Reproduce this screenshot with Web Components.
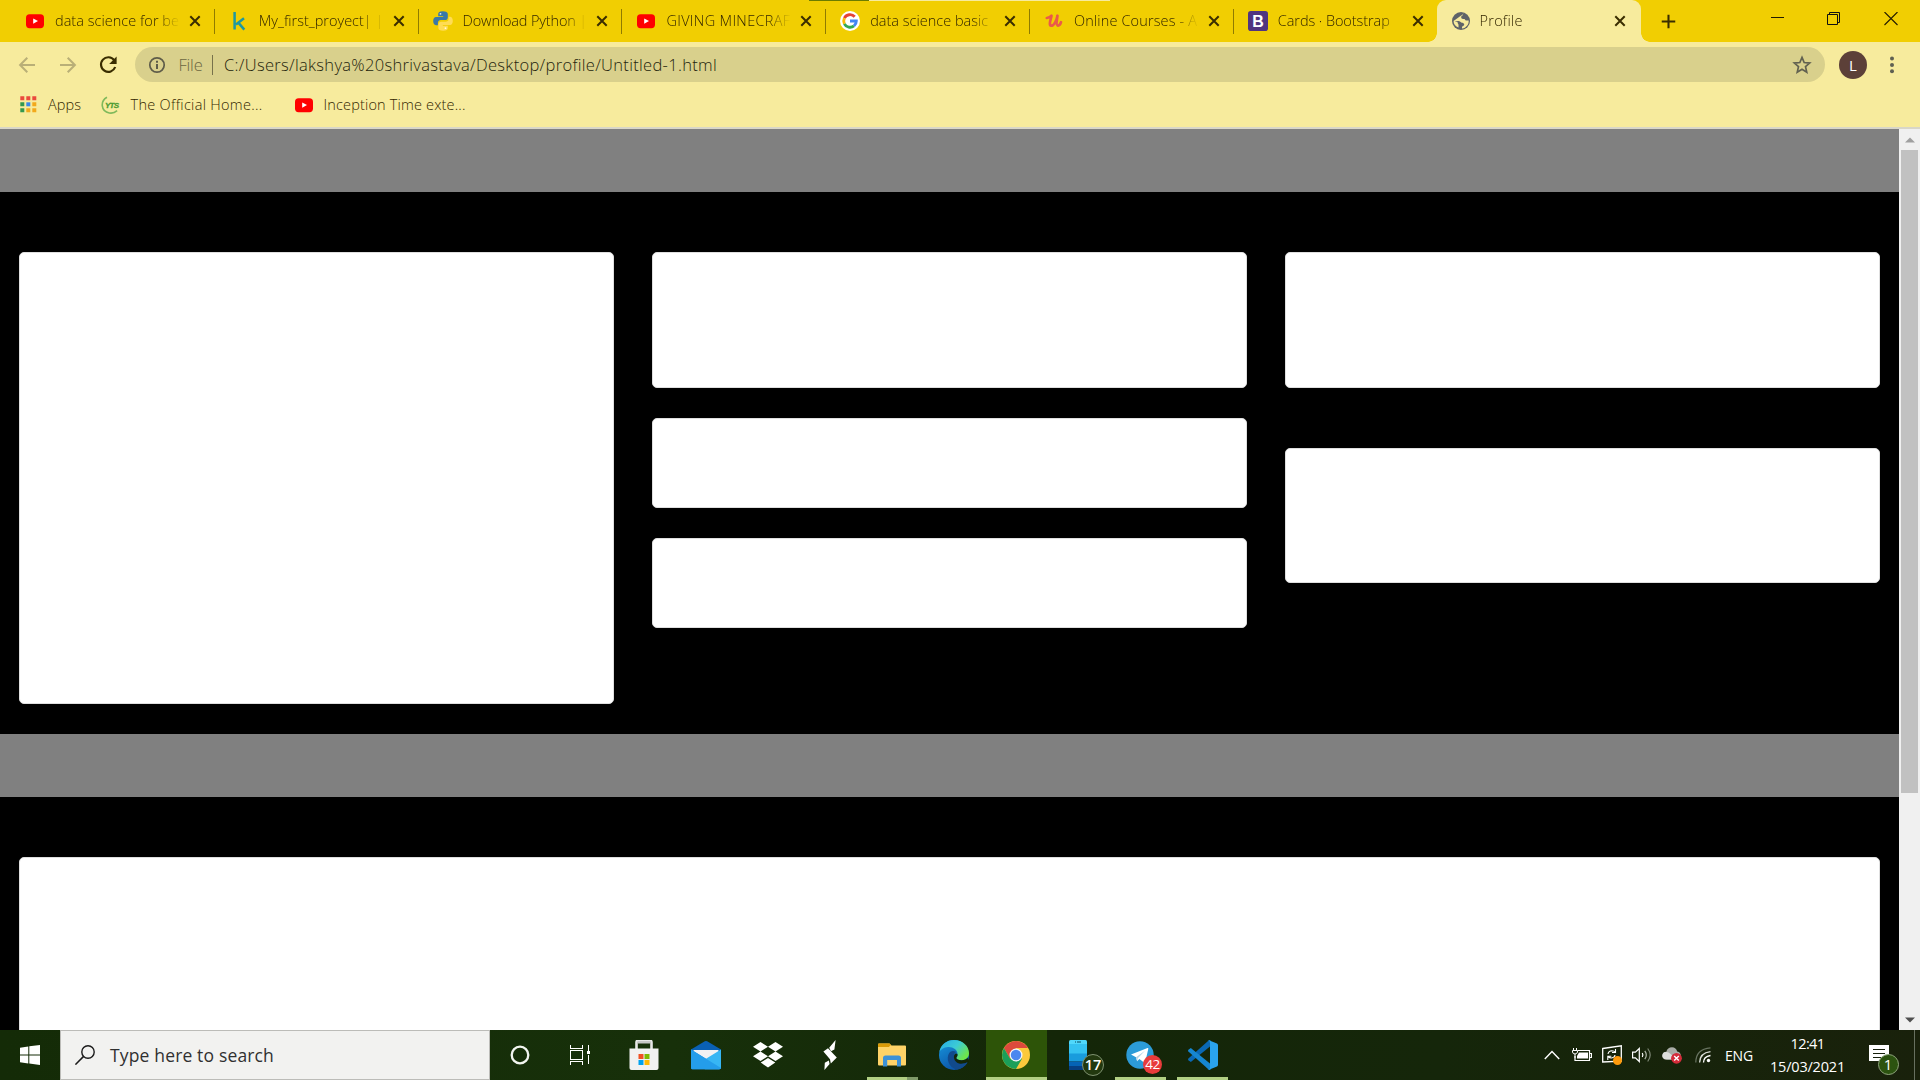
<!DOCTYPE html>
<html lang="en">
<head>
<meta charset="utf-8">
<title>Profile</title>
<style>
html,body{margin:0;padding:0;height:1080px;width:1920px;overflow:hidden;background:#000;font-family:"Open Sans","Noto Sans",sans-serif}
</style>
</head>
<body>
<desktop-screen></desktop-screen>
<script>
const ICONS = {
youtube:`<svg viewBox="0 0 20 20"><rect x="1" y="3.2" width="18" height="14" rx="3.6" fill="#f00"/><path d="M8.2 7.4v5.4l4.8-2.7z" fill="#fff"/></svg>`,
kaggle:`<svg viewBox="0 0 20 20"><path d="M5.6 1v17.5M15 7.2 7 13.6M9.3 11.6l6 7" stroke="#1f98a0" stroke-width="2.5" fill="none"/></svg>`,
python:`<svg viewBox="0 0 20 20"><path d="M9.8.2C6.400.2 5.200 1.300 5.200 3v2.200h5v.9H3C1.200 6.100.2 7.800.2 10.100s1 4.100 2.800 4.100h1.900v-2.300c0-1.700 1.300-2.900 3-2.900h4.300c1.600 0 2.600-1.100 2.600-2.600V3c0-1.700-1.700-2.800-5-2.800z" fill="#3a78a8"/><circle cx="7.500" cy="2.800" r=".9" fill="#dce9f2"/><path d="M10.200 19.800c3.400 0 4.600-1.100 4.600-2.800v-2.200h-5v-.9H17c1.800 0 2.800-1.700 2.800-4S18.800 5.800 17 5.800h-1.400v2.300c0 1.700-1.300 2.700-3 2.700H8.300c-1.700 0-2.900 1.200-2.900 2.700V17c0 1.700 1.500 2.800 4.800 2.800z" fill="#ffdc55"/><circle cx="12.500" cy="17.200" r=".9" fill="#fffbe0"/></svg>`,
google:`<svg viewBox="0 0 20 20"><circle cx="10" cy="10" r="10" fill="#fff"/><g fill="none" stroke-width="2.900"><path d="M14.700 5.700A6.300 6.300 0 0 0 4.400 7.200" stroke="#e54234"/><path d="M4.400 7.200a6.300 6.300 0 0 0 0 5.600" stroke="#fbbc05"/><path d="M4.400 12.800A6.300 6.300 0 0 0 14 14.900" stroke="#34a853"/><path d="M14 14.900A6.300 6.300 0 0 0 16.300 10H10" stroke="#4285f4"/></g></svg>`,
udemy:`<svg viewBox="0 0 20 20"><path d="M2.800 7Q6 6.500 7.500 4.700C7 8 4.300 14.200 7.200 14.700c3 .2 5.500-6 6.300-10-.5 4-2 9.500.3 9.900 1.700.2 2.700-1.700 3.200-3.400" stroke="#ea5a4a" stroke-width="2.700" fill="none" stroke-linecap="round" stroke-linejoin="round"/></svg>`,
bootstrap:`<svg viewBox="0 0 20 20"><rect width="20" height="20" rx="2.800" fill="#503480"/><text x="10" y="15.700" text-anchor="middle" font-family="Liberation Sans,sans-serif" font-weight="700" font-size="16" fill="#fff">B</text></svg>`,
globe:`<svg viewBox="0 0 20 20"><circle cx="10" cy="10" r="9" fill="#5f6368"/><path d="M13.200 2.300c-1 .4-1.400 1-1.300 2-.9.200-1.700.8-1.700 1.900 0 1 .7 1.700 1.800 1.700h1.300c.9 0 .7 1.500 1.700 1.600h2.700c.3 4-2.600 7.600-6.700 8.100v-1.900c1.100-.4 2.200-1 2.200-2.100 0-1.300-1.300-1.900-2.500-1.900-1-.1-1.700-1.600-3.200-1.600H3.100L2.700 9l1.500 1.300c1 .7 2.400 0 2.400 1.200 0 1.100.9 1.300.9 2.200v2.800c-3-1-5-3.600-4.900-6.600z" fill="#f7eb9d"/></svg>`,
close:`<svg viewBox="0 0 12 12"><path d="M1.300 1.300l9.400 9.400M10.700 1.300l-9.400 9.400" stroke="#3a2d00" stroke-width="2"/></svg>`,
plus:`<svg viewBox="0 0 16 16"><path d="M8 .8v14.400M.8 8h14.400" stroke="#3a2d00" stroke-width="2.200"/></svg>`,
winmin:`<svg viewBox="0 0 14 14"><path d="M.5 5.500h13" stroke="#221b00" shape-rendering="crispEdges"/></svg>`,
winmax:`<svg viewBox="0 0 14 14"><path d="M.5 2.500h10v10H.5zM2.500 2.500v-2h10v10h-2" fill="none" stroke="#111"/></svg>`,
winclose:`<svg viewBox="0 0 14 14"><path d="M.5 0l13 13M13.500 0l-13 13" stroke="#221b00" stroke-width="1.100"/></svg>`,
back:`<svg viewBox="0 0 20 20"><path d="M18 10H3.500M10.300 2.800 3.100 10l7.200 7.200" fill="none" stroke="#b9af77" stroke-width="2"/></svg>`,
forward:`<svg viewBox="0 0 20 20"><path d="M2 10h14.500M9.700 2.800l7.200 7.200-7.200 7.200" fill="none" stroke="#b9af77" stroke-width="2"/></svg>`,
reload:`<svg viewBox="0 0 20 20"><path d="M16.200 5.200A7.300 7.300 0 1 0 17.200 12" fill="none" stroke="#3a2d00" stroke-width="2.200"/><path d="M18.600 1.500v7.400h-7.400z" fill="#3a2d00"/></svg>`,
info:`<svg viewBox="0 0 18 18"><circle cx="9" cy="9" r="7.200" fill="none" stroke="#5e5c49" stroke-width="1.700"/><path d="M9 8v5M9 4.800v1.900" stroke="#5e5c49" stroke-width="2"/></svg>`,
star:`<svg viewBox="0 0 20 20"><path d="M10 2.400l2.150 5.150 5.550.48-4.200 3.650 1.250 5.450L10 14.250l-4.750 2.880 1.250-5.450L2.300 8.030l5.550-.48z" fill="none" stroke="#626150" stroke-width="1.700"/></svg>`,
dots:`<svg viewBox="0 0 6 20"><g fill="#5f6052"><circle cx="3" cy="3.500" r="2"/><circle cx="3" cy="10" r="2"/><circle cx="3" cy="16.300" r="2"/></g></svg>`,
apps:`<svg viewBox="0 0 17 17"><g><path d="M.3.300h4v4h-4zM6.300.300h4v4h-4zM12.300.300h4v4h-4z" fill="#ea4a3d"/><path d="M.3 6.300h4v4h-4zM.3 12.300h4v4h-4z" fill="#34984e"/><path d="M6.300 6.300h4v4h-4z" fill="#3b87e8"/><path d="M12.300 6.300h4v4h-4zM6.300 12.300h4v4h-4zM12.300 12.300h4v4h-4z" fill="#f2a91b"/></g></svg>`,
yts:`<svg viewBox="0 0 20 20"><path d="M6 2.200C-1 6-.3 16.500 8.300 18c3 .5 5.800-.5 7.800-2.300" fill="none" stroke="#7fb95b" stroke-width="1.600"/><text x="4" y="12.600" font-family="Liberation Sans,sans-serif" font-size="8" font-weight="700" font-style="italic" fill="#4d9b32" stroke="#4d9b32" stroke-width=".3" textLength="14">YTS</text></svg>`,
windows:`<svg viewBox="0 0 20 20"><path d="M0 2.700 8.300 1.500V9.400H0zM9.300 1.300 20 0v9.400H9.300zM0 10.400h8.300v8L0 17.300zM9.300 10.400H20V20L9.300 18.500z" fill="#fff"/></svg>`,
search:`<svg viewBox="0 0 20 20"><circle cx="13" cy="7" r="6.200" fill="none" stroke="#1b1b1b" stroke-width="1.400"/><path d="M8.600 11.400.4 19.600" stroke="#1b1b1b" stroke-width="1.500"/></svg>`,
cortana:`<svg viewBox="0 0 20 20"><circle cx="10" cy="10" r="8.300" fill="none" stroke="#f2f5f0" stroke-width="2.300"/></svg>`,
taskview:`<svg viewBox="0 0 20 20"><g fill="none" stroke="#fff" shape-rendering="crispEdges"><path d="M.5 0v3.500h12V0M.5 5.500h12v9H.5zM.5 20v-3.500h12V20M18.500 0v6M18.500 10v9"/></g><path d="M17 6h3v3h-3z" fill="#fff"/></svg>`,
store:`<svg viewBox="0 0 30 30"><path d="M7.500 11V2.500a2 2 0 0 1 2-2h11a2 2 0 0 1 2 2V11" fill="none" stroke="#e8e8e8" stroke-width="2.600"/><path d="M8.500 1h13v2.500h-13z" fill="#c6c6c6"/><path d="M.5 8.500h29V28a2 2 0 0 1-2 2h-25a2 2 0 0 1-2-2z" fill="#f1f1f1"/><path d="M9.500 14h5v5h-5z" fill="#f05023"/><path d="M15.500 14h5v5h-5z" fill="#7fba00"/><path d="M9.500 20h5v5h-5z" fill="#00a1ee"/><path d="M15.500 20h5v5h-5z" fill="#ffb901"/></svg>`,
mail:`<svg viewBox="0 0 30 30"><path d="M0 9.500 13.800 1.300q1.200-.6 2.400 0L30 9.500v8H0z" fill="#0a60b4"/><path d="M2.500 10h25v9h-25z" fill="#f1f1f3"/><path d="M0 9.500 30 28a2 2 0 0 1-2 1.200H1.500A1.500 1.500 0 0 1 0 27.700z" fill="#1c8fe2"/><path d="M30 9.500V28q-.4 1.200-2 1.200H14L4 24 15 18.800z" fill="#37b6f4"/><path d="M0 9.500 15 18.800 30 28q-.5 1.200-2 1.200H1.500A1.500 1.500 0 0 1 0 27.700z" fill="#249dea"/></svg>`,
dropbox:`<svg viewBox="0 0 30 26"><path d="M7.500 0 15 4.700 7.500 9.400 0 4.700zM22.500 0 30 4.700l-7.500 4.700L15 4.700zM7.500 9.600 15 14.300 7.500 19 0 14.300zM22.500 9.600 30 14.300 22.500 19 15 14.300zM15 16l7.300 4.600L15 25.400l-7.300-4.800z" fill="#fff"/></svg>`,
bolt:`<svg viewBox="0 0 14 30"><path d="M12.600 0 11.400 9.600 8 11.200 6.200 7.800zM5 8.200 13.800 17.600 7.800 23.400 7 19.200.4 11.400zM5.800 20.600 6.600 24 1.400 30 1.800 22.800z" fill="#fff"/></svg>`,
explorer:`<svg viewBox="0 0 28 24"><path d="M0 1.500Q0 .5 1 .5h10.500l2 2H27q1 0 1 1v18q0 1-1 1H1q-1 0-1-1z" fill="#fed368"/><path d="M0 1.500Q0 .5 1 .5h10.500l1.500 1.500-2.200 2H0z" fill="#d99a07"/><path d="M5 23.500V15q0-2.500 2.500-2.500h13Q23 12.500 23 15v8.500h-4V17H9.200v6.500z" fill="#3c92d7"/></svg>`,
edge:`<svg viewBox="0 0 30 30"><defs><linearGradient id="a" y2=".6"><stop stop-color="#25a9e8"/><stop offset=".55" stop-color="#3ccbd5"/><stop offset="1" stop-color="#6ee649"/></linearGradient><linearGradient id="b" x2=".6" y2="1"><stop stop-color="#1798de"/><stop offset="1" stop-color="#0c51a4"/></linearGradient></defs><circle cx="15" cy="15" r="15" fill="url(#b)"/><path d="M.3 12C1.600 4.800 7.600 0 15 0c8.500 0 15 6 15 13.200 0 4.300-3.200 7-7.300 7-3.400 0-5.400-1.100-5.400-2.200 0-.8 1.300-1.300 1.300-3.600C18.600 9.600 13.600 6.600 9 7 4.600 7.300 1.600 9.500.3 12z" fill="url(#a)"/><path d="M10.200 13c-3.600 5.600-.3 14.500 7.600 16.700 4.200-.4 8.200-2.900 10.500-6.700.3-.7-.2-1-.8-.8-6.300 3-12.600.3-12.600-6 0-2 1-3.200 2.200-4.200-2.700-1.700-5.300-1.200-6.900 1z" fill="#114a8c"/><path d="M18.600 14.400c0 2.300-1.300 2.800-1.300 3.600 0 1.300 2.500 2.300 5.400 2.200 2.700 0 4.600-.9 5.900-2.500L30 22l-2 .3c-6.800 3.500-13 .3-13.100-5.600.1-2.600 2-4.500 3.700-2.300z" fill="#142608"/></svg>`,
chrome:`<svg viewBox="0 0 28 28"><circle cx="14" cy="14" r="14" fill="#fbc93c"/><path d="M1.900 7A14 14 0 0 1 26.100 7H14L8 17.500z" fill="#dc4a3c"/><path d="M1.900 7A14 14 0 0 0 14 28l6.100-10.500H8z" fill="#1b9f59"/><circle cx="14" cy="14" r="6.500" fill="#f4f6f9"/><circle cx="14" cy="14" r="5.200" fill="#4b87ef"/></svg>`,
phone:`<svg viewBox="0 0 18 30"><path d="M0 1.500Q0 0 1.500 0h15Q18 0 18 1.500V8H0z" fill="#50d8fb"/><path d="M0 4h18v10H0z" fill="#35c2f1"/><path d="M0 13.500h18v8H0z" fill="#199cdd"/><path d="M0 21.500h18v7q0 1.500-1.500 1.500h-15Q0 30 0 28.500z" fill="#0563b5"/><path d="M0 26h18v2.500q0 1.500-1.500 1.500h-15Q0 30 0 28.500z" fill="#063f82"/><path d="M6 2h1M8 2h4" stroke="#094b63" stroke-width="1.200"/></svg>`,
telegram:`<svg viewBox="0 0 28 28"><circle cx="14" cy="14" r="13.700" fill="#2c9bd8"/><path d="M5 13.500 21.500 7q1-.2.800.8l-3 13.200q-.3 1-1.300.4l-4.600-3.400-2.300 2.200L10 16.300z" fill="#fff"/><path d="M10 16.300 19 9.800l-7.200 7.500-.7 2.900z" fill="#b6d2e3"/></svg>`,
vscode:`<svg viewBox="0 0 30 30"><path d="M22 6.500 2.800 22 .4 20.200q-.7-.8 0-1.600L20.600.5q1-.8 2 0z" fill="#0a68b4"/><path d="M22 23.500 2.800 8 .4 9.800q-.7.800 0 1.600L20.600 29.500q1 .8 2 0z" fill="#1686d1"/><path d="M21.500.4 29 3.600q1 .5 1 1.700v19.400q0 1.200-1 1.700l-7.500 3.200q-1.200.5-2-.4 2.500.8 2.500-2V3.300q0-3.400-2.500-2.500.8-.9 2-.4z" fill="#2aa3ee"/></svg>`,
chevron:`<svg viewBox="0 0 16 10"><path d="M.8 9 8 1.500 15.200 9" fill="none" stroke="#fff" stroke-width="1.400"/></svg>`,
battery:`<svg viewBox="0 0 20 14"><path d="M6 2.500h11.500v10H3V8M18 5.500h1.500v4H18" fill="none" stroke="#fff" stroke-width="1.200"/><path d="M7 4.500h9v6H5V8z" fill="#fff"/><path d="M1.500 0v2M4.500 0v2M.5 2.500h5V4Q5 6 3 6 .8 6 .5 4zM3 6v4" fill="none" stroke="#fff"/></svg>`,
update:`<svg viewBox="0 0 20 20"><path d="M.7 3.500 19.300.8v15.400L.7 17z" fill="none" stroke="#fff" stroke-width="1.300"/><path d="M6 9Q6.500 6 10 5.700q2 0 3.300 1.500M13.500 4v3.500H10M13 10q-.5 2.700-3.500 3Q7.500 13 6 11.500M5.800 15v-3.700h3.500" fill="none" stroke="#fff" stroke-width="1.100"/><circle cx="15.500" cy="15.500" r="4.500" fill="#ff9a0c"/></svg>`,
volume:`<svg viewBox="0 0 20 18"><path d="M.6 6.200h2.800L7.300 2.500v13L3.400 11.800H.6z" fill="none" stroke="#fff" stroke-width="1.200"/><path d="M10.300 7q1.200 2 0 4" stroke="#fff" stroke-width="1.200" fill="none"/><path d="M12.800 4.800q3 4.200 0 8.400" stroke="#aeb6a8" stroke-width="1.200" fill="none"/><path d="M15.700 2.500q5 6.500 0 13" stroke="#7d8775" stroke-width="1.200" fill="none"/></svg>`,
cloud:`<svg viewBox="0 0 20 18"><path d="M5 13.500Q.3 13 .3 9.500.4 6 4.300 5.800 5.500 1.300 10 1.300q4.200.2 5.200 4.100Q19 6 18.700 10L14 13.500z" fill="#a9aca7"/><path d="M4 13.500Q.3 13 .3 9.700.6 6.300 4 6q2.500-.3 4.300 1.800L13 12v1.500z" fill="#dedfdd"/><circle cx="14.500" cy="12.300" r="5.400" fill="#d42b3a"/><path d="M12.200 10l4.600 4.600M16.800 10l-4.600 4.600" stroke="#fff" stroke-width="1.400"/></svg>`,
wifi:`<svg viewBox="0 0 16 16"><g fill="none" stroke-width="1.300"><path d="M.8 15.500Q.8 2 15.500.8" stroke="#687361"/><path d="M4.600 15.500Q4.800 6 15.500 4.700" stroke="#d9ddd6"/><path d="M8.500 15.500Q8.500 9.500 15.500 8.500" stroke="#fff"/></g><circle cx="13.500" cy="13.500" r="1.700" fill="#fff"/></svg>`,
notice:`<svg viewBox="0 0 20 20"><path d="M0 0h20v16H12l-2 4v-4H0z" fill="#fff"/><path d="M4 4.500h12M4 8.500h12M4 12.500h8" stroke="#17200d" stroke-width="1.200"/></svg>`,
up:`<svg viewBox="0 0 10 6"><path d="M0 5.500 5 .5l5 5z" fill="#9f9f9f"/></svg>`,
down:`<svg viewBox="0 0 10 6"><path d="M0 .5l5 5 5-5z" fill="#505050"/></svg>`
};

/* Registers an element whose open shadow root is cloned from a template. */
function define(tag, html, ready) {
  const t = document.createElement('template');
  t.innerHTML = html;
  customElements.define(tag, class extends HTMLElement {
    connectedCallback() {
      if (this.shadowRoot) return;
      this.attachShadow({mode: 'open'}).append(t.content.cloneNode(true));
      if (ready) ready(this, this.shadowRoot);
    }
  });
}

/* <ui-icon name w h> */
define('ui-icon', `<style>:host{display:block;flex:none}svg{display:block;width:100%;height:100%}</style>`, (el, root) => {
  el.style.width = el.getAttribute('w') + 'px';
  el.style.height = el.getAttribute('h') + 'px';
  root.innerHTML += ICONS[el.getAttribute('name')];
});

/* <fit-text w> : one line, tracked so that it spans w pixels */
define('fit-text', `<style>:host{display:block;white-space:nowrap;flex:none}span{display:inline-block}</style><span></span>`, (el, root) => {
  const s = root.querySelector('span');
  s.textContent = el.getAttribute('text');
  const w = +el.getAttribute('w'), n = s.textContent.length;
  s.style.letterSpacing = (w - s.getBoundingClientRect().width) / n + 'px';
});

define('browser-tab', `<style>
:host{display:flex;align-items:center;width:203.8px;height:42px;box-sizing:border-box;padding:0 0 0 14px;flex:none;position:relative;color:#332600;font-size:14.5px;font-weight:360}
.t{width:125px;margin:0 5px 0 10px;padding-bottom:1px;overflow:hidden;-webkit-mask-image:linear-gradient(90deg,#000 82%,transparent 100%);mask-image:linear-gradient(90deg,#000 82%,transparent 100%)}
.c{width:20px;display:flex;justify-content:center}
.s{width:1px;height:25px;background:#8f7b00;margin-left:9px}
:host([plain]) .s{visibility:hidden}
:host([active]){background:#f7eb9d;border-radius:9px 9px 0 0;margin-left:-1px;padding-left:15px;width:204.800px}
:host([active])::before,:host([active])::after{content:"";position:absolute;bottom:0;width:9px;height:9px}
:host([active])::before{left:-9px;background:radial-gradient(circle at 0 0,transparent 8.5px,#f7eb9d 9px)}
:host([active])::after{right:-9px;background:radial-gradient(circle at 100% 0,transparent 8.5px,#f7eb9d 9px)}
:host([active]) .t{margin-left:9px;margin-right:6px}
:host([active]) ui-icon,:host([active]) ::slotted(ui-icon){margin-left:-1px}
</style><slot></slot><div class="t"></div><div class="c"><ui-icon name="close" w="12" h="12"></ui-icon></div><div class="s"></div>`, (el, root) => {
  const f = document.createElement('fit-text');
  f.setAttribute('text', el.getAttribute('label'));
  f.setAttribute('w', el.getAttribute('w'));
  root.querySelector('.t').append(f);
});

define('tab-strip', `<style>
:host{display:flex;height:42px;background:#f1ce02;padding-left:11px;position:relative}
.g{flex:1}.p{align-self:center;margin-left:20px}
.l{position:absolute;top:0;left:809px;width:60px;height:1px;background:#6b7c00}
.m{position:absolute;top:0;left:869px;width:241px;height:1px;background:#f7eb9d}
.w{display:flex;gap:43px;padding:12px 22px 0 0}
</style>
<browser-tab label="data science for be" w="124"><ui-icon name="youtube" w="20" h="20"></ui-icon></browser-tab>
<browser-tab label="My_first_proyect| |" w="124.5"><ui-icon name="kaggle" w="20" h="20"></ui-icon></browser-tab>
<browser-tab label="Download Python |" w="124.5"><ui-icon name="python" w="20" h="20"></ui-icon></browser-tab>
<browser-tab label="GIVING MINECRAF" w="124"><ui-icon name="youtube" w="20" h="20"></ui-icon></browser-tab>
<browser-tab label="data science basic" w="118"><ui-icon name="google" w="20" h="20"></ui-icon></browser-tab>
<browser-tab label="Online Courses - A" w="123"><ui-icon name="udemy" w="20" h="20"></ui-icon></browser-tab>
<browser-tab label="Cards · Bootstrap" w="112" plain><ui-icon name="bootstrap" w="20" h="20"></ui-icon></browser-tab>
<browser-tab label="Profile" w="43" active plain><ui-icon name="globe" w="20" h="20"></ui-icon></browser-tab>
<ui-icon class="p" name="plus" w="15" h="15"></ui-icon><div class="g"></div>
<div class="w"><ui-icon name="winmin" w="14" h="14"></ui-icon><ui-icon name="winmax" w="14" h="14"></ui-icon><ui-icon name="winclose" w="14" h="14"></ui-icon></div>
<div class="l"></div><div class="m"></div>`);

define('address-bar', `<style>
:host{display:flex;height:45px;align-items:center;background:#f7eb9d;padding-left:17px;box-sizing:border-box}
.n{display:flex;gap:20.500px;width:118px}
.o{display:flex;align-items:center;width:1690px;height:35px;box-sizing:border-box;border-radius:18px;background:#d9d08c;padding:0 13px 0 13px;color:#241f0c;font-size:16.5px;font-weight:360}
.f{color:#6b6540;margin:0 9.500px 0 12.500px}.b{width:1px;height:20px;background:#77714b;margin-right:11px}
.g{flex:1}
.a{width:28px;height:28px;border-radius:50%;background:#5c4038;color:#fff;font:15px/28px "Open Sans",sans-serif;text-align:center;margin:0 22px 0 14px}
</style><div class="n"><ui-icon name="back" w="20" h="20"></ui-icon><ui-icon name="forward" w="20" h="20"></ui-icon><ui-icon name="reload" w="20" h="20"></ui-icon></div>
<div class="o"><ui-icon name="info" w="18" h="18"></ui-icon><fit-text class="f" w="24" text="File"></fit-text><div class="b"></div><fit-text w="493" text="C:/Users/lakshya%20shrivastava/Desktop/profile/Untitled-1.html"></fit-text><div class="g"></div><ui-icon name="star" w="20" h="20"></ui-icon></div>
<div class="a">L</div><ui-icon name="dots" w="6" h="20"></ui-icon>`);

define('bookmark-bar', `<style>
:host{display:flex;align-items:center;background:#f7eb9d;border-bottom:2px solid #d8d6c8;box-sizing:border-box;height:42px;padding:0 0 5px 19.500px;color:#332600;font-size:14.5px;font-weight:360}
.a{margin:0 20px 0 11.500px}.b{margin:0 31px 0 9.500px}.c{margin-left:10px}
</style><ui-icon name="apps" w="17" h="17"></ui-icon><fit-text class="a" w="33" text="Apps"></fit-text><ui-icon name="yts" w="20" h="20"></ui-icon><fit-text class="b" w="132" text="The Official Home..."></fit-text><ui-icon name="youtube" w="20" h="20"></ui-icon><fit-text class="c" w="142" text="Inception Time exte..."></fit-text>`);

define('profile-card', `<style>:host{display:block;background:#fff;border:1px solid #dfdfdf;border-radius:5px;box-sizing:border-box;flex:none}</style><slot></slot>`, el => {
  el.style.height = el.getAttribute('h') + 'px';
});
define('grey-band', `<style>:host{display:block;height:63px;background:#808080;flex:none}</style>`);

define('profile-page', `<style>
:host{display:flex;flex-direction:column;width:1899px;height:901px;background:#000;overflow:hidden}
.r{display:flex;gap:38px;padding:60px 19px 0;height:482px;flex:none}
.c{width:595px;display:flex;flex-direction:column;gap:30px}
.c.w{gap:60px}.f{padding:60px 19px 0}
</style><grey-band></grey-band>
<div class="r"><div class="c"><profile-card h="452"></profile-card></div>
<div class="c"><profile-card h="136"></profile-card><profile-card h="90"></profile-card><profile-card h="90"></profile-card></div>
<div class="c w"><profile-card h="136"></profile-card><profile-card h="135"></profile-card></div></div>
<grey-band></grey-band><div class="f"><profile-card h="240"></profile-card></div>`);

define('page-scrollbar', `<style>
:host{display:flex;flex-direction:column;width:21px;background:#f0f0f0;align-items:center}
.u{height:21px;display:flex;align-items:center;padding-top:1px;box-sizing:border-box}.t{width:17px;height:643px;background:#c1c1c1;align-self:flex-start;margin-left:2px}.g{flex:1}
</style><div class="u"><ui-icon name="up" w="10" h="6"></ui-icon></div><div class="t"></div><div class="g"></div><div class="u"><ui-icon name="down" w="10" h="6"></ui-icon></div>`);

define('task-button', `<style>
:host{display:flex;align-items:center;justify-content:center;width:62px;height:50px;position:relative;flex:none}
:host([open])::after{content:"";position:absolute;bottom:0;left:5px;width:51px;height:3px;background:#b2d084}
:host([stack])::after{left:6px;background:linear-gradient(90deg,#b2d084 40px,#7f9a68 40px)}
:host([current]){background:#2d5408}
:host([current])::after{left:0;width:61px}
</style><slot></slot>`);

define('count-badge', `<style>:host{position:absolute;box-sizing:border-box;border-radius:50%;display:flex;align-items:center;justify-content:center;color:#fff;line-height:1}</style><slot></slot>`);

define('system-tray', `<style>
:host{display:flex;align-items:center;height:50px;width:376px;flex:none;color:#fff}
.e{font-size:14px;margin:0 17px 0 14px}
.k{display:flex;flex-direction:column;align-items:center;width:75px;font-size:14.500px;line-height:23px}
.n{position:relative;margin:0 0 0 24px}
.d{margin-left:25px;width:1px;height:50px;background:#67705f}
count-badge{left:8.500px;top:9px;width:21px;height:21px;background:#2c5310;border:1px solid #8fa57c;font-size:15px}
</style><ui-icon name="chevron" w="16" h="10"></ui-icon><ui-icon style="margin-left:12px" name="battery" w="20" h="14"></ui-icon><ui-icon style="margin-left:10px" name="update" w="20" h="20"></ui-icon><ui-icon style="margin-left:10px" name="volume" w="20" h="18"></ui-icon><ui-icon style="margin-left:10px" name="cloud" w="20" h="18"></ui-icon><ui-icon style="margin-left:13px" name="wifi" w="16" h="16"></ui-icon>
<fit-text class="e" w="28" text="ENG"></fit-text><div class="k"><fit-text w="34" text="12:41"></fit-text><fit-text w="75" text="15/03/2021"></fit-text></div>
<div class="n"><ui-icon name="notice" w="20" h="20"></ui-icon><count-badge>1</count-badge></div><div class="d"></div>`);

define('task-bar', `<style>
:host{display:flex;height:50px;background:linear-gradient(90deg,#142b07,#17300a 35%,#142608 55%,#15260a 75%,#19210b)}
.s{width:60px;display:flex;align-items:center;justify-content:center}
.q{width:430px;height:50px;box-sizing:border-box;background:#f2f2f0;border:1px solid #bcbcb8;display:flex;align-items:center;padding-left:14px;color:#303030;font-size:17.500px}
.q fit-text{margin:0 0 0 15px}
.g{flex:1}
.b1{left:35px;top:24px;width:22px;height:22px;background:#22380f;border:1px solid #7f9270;font:600 14.500px/1 "Open Sans",sans-serif}
.b2{left:33px;top:25px;width:19px;height:19px;background:#e83b3b;font-size:13.500px;letter-spacing:-.5px}
.sp{margin-right:3px}
</style><div class="s"><ui-icon name="windows" w="20" h="20"></ui-icon></div>
<div class="q"><ui-icon name="search" w="20" h="20"></ui-icon><fit-text w="164" text="Type here to search"></fit-text></div>
<task-button style="width:60px"><ui-icon name="cortana" w="20" h="20"></ui-icon></task-button>
<task-button style="width:60px"><ui-icon name="taskview" w="20" h="20"></ui-icon></task-button>
<task-button style="width:67px"><ui-icon name="store" w="30" h="30"></ui-icon></task-button>
<task-button style="width:58px"><ui-icon name="mail" w="30" h="30"></ui-icon></task-button>
<task-button style="width:65px"><ui-icon name="dropbox" w="30" h="26"></ui-icon></task-button>
<task-button style="width:60px"><ui-icon name="bolt" w="14" h="30"></ui-icon></task-button>
<task-button style="margin-left:1px" open stack><ui-icon name="explorer" w="28" h="24"></ui-icon></task-button>
<task-button><ui-icon name="edge" w="30" h="30"></ui-icon></task-button>
<task-button style="width:61px;margin-left:1px" open current><ui-icon style="margin-right:1px" name="chrome" w="28" h="28"></ui-icon></task-button>
<task-button><ui-icon name="phone" w="18" h="30"></ui-icon><count-badge class="b1">17</count-badge></task-button>
<task-button open style="margin-left:1px"><ui-icon class="sp" name="telegram" w="28" h="28"></ui-icon><count-badge class="b2">42</count-badge></task-button>
<task-button open><ui-icon name="vscode" w="30" h="30"></ui-icon></task-button>
<div class="g"></div><system-tray></system-tray>`);

define('desktop-screen', `<style>
:host{display:flex;flex-direction:column;width:1920px;height:1080px;font-family:"Open Sans","Noto Sans",sans-serif}
.v{display:flex;height:901px}
</style><tab-strip></tab-strip><address-bar></address-bar><bookmark-bar></bookmark-bar><div class="v"><profile-page></profile-page><page-scrollbar></page-scrollbar></div><task-bar></task-bar>`);
</script>
</body>
</html>
